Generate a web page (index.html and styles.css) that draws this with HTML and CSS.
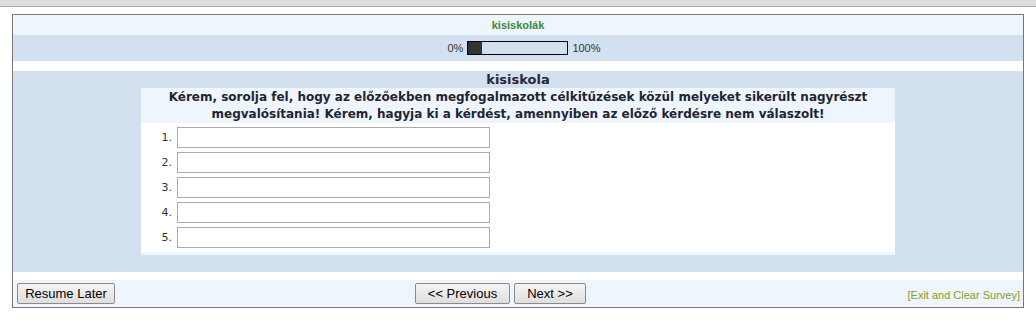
FILE: index.html
```html
<!DOCTYPE html>
<html lang="hu">
<head>
  <meta charset="UTF-8">
  <title>kisiskolák</title>
  <link rel="stylesheet" href="styles.css">
</head>

<body>
  <div class="topbar"></div>

  <div class="survey">
    <!-- Survey title -->
    <div class="survey-title">kisiskolák</div>

    <!-- Progress -->
    <div class="progress-row">
      <span>0%</span>
      <div class="progress"><div class="progress-fill"></div></div>
      <span>100%</span>
    </div>

    <!-- Question -->
    <div class="question-area">
      <div class="question-title">kisiskola</div>
      <div class="question-card">
        <div class="question-text">
          Kérem, sorolja fel, hogy az előzőekben megfogalmazott célkitűzések közül melyeket sikerült nagyrészt<br>
          megvalósítania! Kérem, hagyja ki a kérdést, amennyiben az előző kérdésre nem válaszolt!
        </div>
        <div class="answers">
          <div class="answer-row"><label>1.</label><input type="text" class="answer-field"></div>
          <div class="answer-row"><label>2.</label><input type="text" class="answer-field"></div>
          <div class="answer-row"><label>3.</label><input type="text" class="answer-field"></div>
          <div class="answer-row"><label>4.</label><input type="text" class="answer-field"></div>
          <div class="answer-row"><label>5.</label><input type="text" class="answer-field"></div>
        </div>
      </div>
    </div>

    <!-- Navigation -->
    <div class="nav-row">
      <div class="nav-left">
        <button class="nav-button resume">Resume Later</button>
      </div>
      <div class="nav-center">
        <button class="nav-button prev">&lt;&lt; Previous</button>
        <button class="nav-button next">Next &gt;&gt;</button>
      </div>
      <div class="nav-right">
        <a href="#">[Exit and Clear Survey]</a>
      </div>
    </div>
  </div>
</body>
</html>
```

FILE: styles.css
```css
body {
  margin: 0;
  padding: 0;
  background-color: #ffffff;
  font-family: 'Liberation Sans', Arial, sans-serif;
  color: #333;
}

.topbar {
  height: 6px;
  background-color: #dedede;
  border-bottom: 1px solid #ababab;
}

.survey {
  margin: 7px 12px 0 12px;
  border: 1px solid #777;
  background-color: #ffffff;
}

.survey-title {
  height: 20px;
  line-height: 20px;
  background-color: #eef5fd;
  text-align: center;
  font-size: 11px;
  font-weight: bold;
  color: #3a8a3a;
}

.progress-row {
  height: 26px;
  display: flex;
  align-items: center;
  justify-content: center;
  gap: 4px;
  padding-left: 12px;
  background-color: #d3e0f0;
  font-size: 11px;
  color: #333;
}

.progress {
  width: 99px;
  height: 12px;
  border: 1px solid #000;
  display: flex;
}

.progress-fill {
  width: 14px;
  background-color: #333;
}

.question-area {
  margin-top: 10px;
  padding-bottom: 17px;
  background-color: #d3e0f0;
}

.question-title {
  height: 17px;
  line-height: 17px;
  text-align: center;
  font-family: 'DejaVu Sans', Verdana, sans-serif;
  font-size: 13px;
  font-weight: bold;
  color: #2a2635;
}

.question-card {
  width: 754px;
  margin: 0 auto;
  background-color: #ffffff;
  border-bottom: 3px solid #eef5fd;
}

.question-text {
  padding-top: 1px;
  line-height: 17px;
  background-color: #eef5fd;
  text-align: center;
  font-family: 'DejaVu Sans', Verdana, sans-serif;
  font-size: 12px;
  font-weight: bold;
  color: #1f2533;
}

.answers {
  display: flex;
  flex-direction: column;
  gap: 4px;
  padding: 4px 0;
}

.answer-row {
  display: flex;
  align-items: center;
  gap: 5px;
}

.answer-row label {
  width: 31px;
  text-align: right;
  font-family: 'DejaVu Sans', Verdana, sans-serif;
  font-size: 11px;
  color: #333;
}

.answer-field {
  box-sizing: border-box;
  width: 313px;
  height: 21px;
  margin: 0;
  padding: 1px 3px;
  border: 1px solid #aaa;
  background: #ffffff;
}

.nav-row {
  margin-top: 8px;
  height: 27px;
  padding: 0 3px 0 4px;
  display: flex;
  align-items: center;
  background-color: #eef5fd;
}

.nav-left {
  width: 398px;
}

.nav-center {
  display: flex;
  gap: 4px;
}

.nav-right {
  flex: 1;
  text-align: right;
}

.nav-right a {
  font-size: 11px;
  color: #82a02a;
  text-decoration: none;
}

.nav-button {
  box-sizing: border-box;
  height: 21px;
  padding: 0;
  font-family: 'Liberation Sans', Arial, sans-serif;
  font-size: 13px;
  color: #000;
  background: linear-gradient(#f4f4f4, #dedede);
  border: 1px solid #8a8a8a;
  border-radius: 2px;
  cursor: pointer;
}

.resume {
  width: 98px;
}

.prev {
  width: 95px;
}

.next {
  width: 72px;
}
```
